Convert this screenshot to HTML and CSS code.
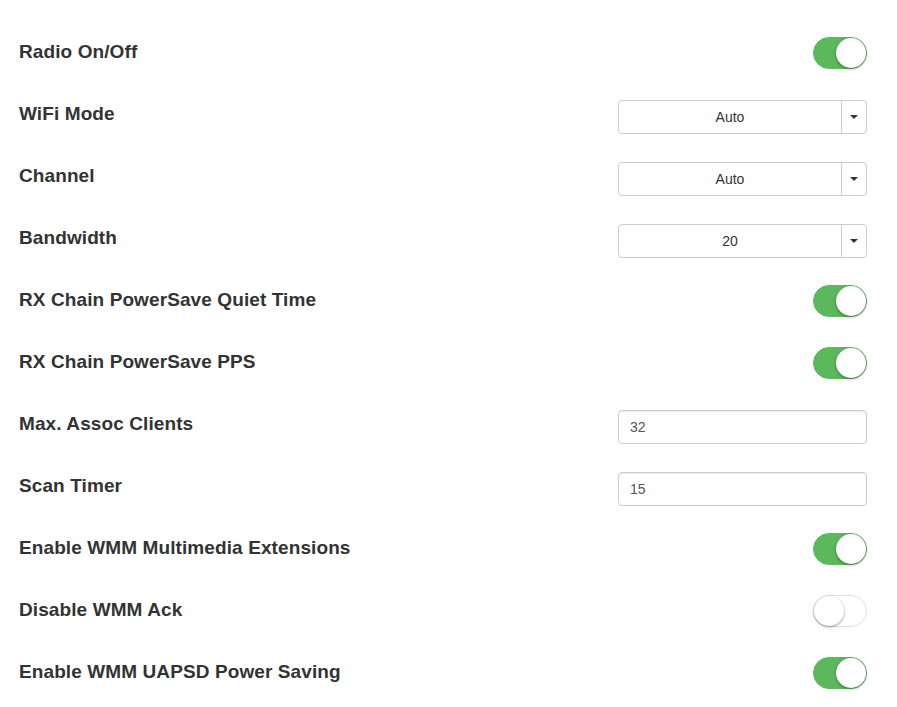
FILE: index.html
```html
<!DOCTYPE html>
<html>
<head>
<meta charset="utf-8">
<link rel="stylesheet" href="styles.css">
</head>
<body>
<div class="form">
  <div class="row"><label class="lbl">Radio On/Off</label><span class="switch on"><span class="knob"></span></span></div>
  <div class="row"><label class="lbl">WiFi Mode</label><div class="select"><span class="val">Auto</span><span class="caret-box"><span class="caret"></span></span></div></div>
  <div class="row"><label class="lbl">Channel</label><div class="select"><span class="val">Auto</span><span class="caret-box"><span class="caret"></span></span></div></div>
  <div class="row"><label class="lbl">Bandwidth</label><div class="select"><span class="val">20</span><span class="caret-box"><span class="caret"></span></span></div></div>
  <div class="row"><label class="lbl">RX Chain PowerSave Quiet Time</label><span class="switch on"><span class="knob"></span></span></div>
  <div class="row"><label class="lbl">RX Chain PowerSave PPS</label><span class="switch on"><span class="knob"></span></span></div>
  <div class="row"><label class="lbl">Max. Assoc Clients</label><input class="input" type="text" value="32"></div>
  <div class="row"><label class="lbl">Scan Timer</label><input class="input" type="text" value="15"></div>
  <div class="row"><label class="lbl">Enable WMM Multimedia Extensions</label><span class="switch on"><span class="knob"></span></span></div>
  <div class="row"><label class="lbl">Disable WMM Ack</label><span class="switch"><span class="knob"></span></span></div>
  <div class="row"><label class="lbl">Enable WMM UAPSD Power Saving</label><span class="switch on"><span class="knob"></span></span></div>
</div>
</body>
</html>
```
FILE: styles.css
```css
* { box-sizing: border-box; }
html, body { margin: 0; padding: 0; background: #fff; }
body { font-family: "Liberation Sans", Arial, sans-serif; color: #333; }
.form { padding: 21px 30px 0 19px; }
.row { display: flex; justify-content: space-between; align-items: flex-start; height: 62px; }
.lbl { font-size: 19px; font-weight: bold; line-height: 24px; margin-top: 19px; color: #333; letter-spacing: 0.1px; }
.switch { position: relative; display: block; width: 54px; height: 32px; margin-top: 16px; border-radius: 16px; background: #fff; border: 1px solid #dfdfdf; }
.switch.on { background: #5cb85c; border-color: #5cb85c; }
.knob { position: absolute; top: 0; left: 0; width: 30px; height: 30px; border-radius: 50%; background: #fff; box-shadow: 0 1px 3px rgba(0,0,0,0.4); }
.switch.on .knob { left: 22px; }
.select { display: flex; width: 249px; height: 34px; margin-top: 17px; border: 1px solid #ccc; border-radius: 4px; background: #fff; }
.val { flex: 1; text-align: center; font-size: 14px; line-height: 32px; color: #333; }
.caret-box { width: 25px; border-left: 1px solid #ccc; display: flex; align-items: center; justify-content: center; }
.caret { width: 0; height: 0; border-left: 4px solid transparent; border-right: 4px solid transparent; border-top: 4px solid #333; }
.input { display: block; width: 249px; height: 34px; margin-top: 17px; padding: 0 11px; border: 1px solid #ccc; border-radius: 4px; font-family: "Liberation Sans", Arial, sans-serif; font-size: 14px; color: #555; background: #fff; box-shadow: inset 0 1px 1px rgba(0,0,0,0.075); outline: none; }
```
